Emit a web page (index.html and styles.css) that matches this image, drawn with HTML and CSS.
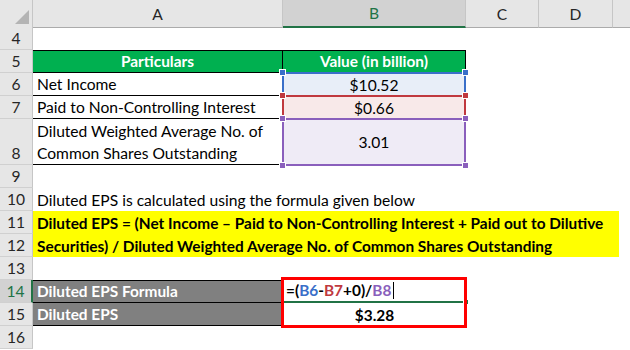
FILE: index.html
```html
<!DOCTYPE html>
<html>
<head>
<meta charset="utf-8">
<link rel="stylesheet" href="styles.css">
</head>
<body>
<div class="sheet">
  <div class="row head">
    <div class="corner"><svg width="33" height="27" viewBox="0 0 33 27"><polygon points="29,10 29,24 15,24" fill="#b4b4b4"/></svg></div>
    <div class="ch">A</div>
    <div class="ch sel">B</div>
    <div class="ch">C</div>
    <div class="ch">D</div>
    <div class="ch last"></div>
  </div>

  <div class="row">
    <div class="rh">4</div><div class="c"></div><div class="c"></div>
  </div>

  <div class="row">
    <div class="rh">5</div>
    <div class="c th">Particulars</div>
    <div class="c th thb">Value (in billion)</div>
  </div>

  <div class="row">
    <div class="rh">6</div>
    <div class="c lab">Net Income</div>
    <div class="c val hb blue"><i class="sq tl"></i><i class="sq tr"></i>$10.52</div>
  </div>

  <div class="row">
    <div class="rh">7</div>
    <div class="c lab">Paid to Non-Controlling Interest</div>
    <div class="c val hb red"><i class="sq tl"></i><i class="sq tr"></i>$0.66</div>
  </div>

  <div class="row tall">
    <div class="rh">8</div>
    <div class="c lab wrap">Diluted Weighted Average No. of<br>Common Shares Outstanding</div>
    <div class="c val mid hb purple last-hb"><i class="sq tl"></i><i class="sq tr"></i><i class="sq bl"></i><i class="sq br"></i>3.01</div>
  </div>

  <div class="row">
    <div class="rh">9</div>
  </div>

  <div class="row">
    <div class="rh">10</div>
    <div class="c span">Diluted EPS is calculated using the formula given below</div>
  </div>

  <div class="row">
    <div class="rh">11</div>
    <div class="c span yel">Diluted EPS = (Net Income – Paid to Non-Controlling Interest + Paid out to Dilutive</div>
  </div>

  <div class="row">
    <div class="rh">12</div>
    <div class="c span yel">Securities) / Diluted Weighted Average No. of Common Shares Outstanding</div>
  </div>

  <div class="row">
    <div class="rh">13</div>
  </div>

  <div class="row">
    <div class="rh act">14</div>
    <div class="c gray gtop">Diluted EPS Formula</div>
    <div class="c fx"><span class="k">=(</span><span class="bl-t">B6</span><span class="k">-</span><span class="rd-t">B7</span><span class="k">+0)/</span><span class="pu-t">B8</span><span class="caret"></span><i class="fill"></i></div>
  </div>

  <div class="row">
    <div class="rh">15</div>
    <div class="c gray">Diluted EPS</div>
    <div class="c res">$3.28</div>
  </div>

  <div class="row">
    <div class="rh">16</div>
  </div>

  <div class="redbox"></div>
</div>
</body>
</html>
```

FILE: styles.css
```css
* { box-sizing: border-box; }
html, body { margin: 0; padding: 0; background: #fff; }
body {
  font-family: Lato, "Open Sans", sans-serif;
  font-size: 15.6px;
  color: #000;
  width: 630px;
  height: 350px;
  overflow: hidden;
}
.sheet { position: relative; width: 630px; }
.row {
  display: grid;
  grid-template-columns: 33px 250px 183px 73px 74px 17px;
  height: 23px;
}
.row.tall { height: 46px; }
.row.head { height: 27px; }

.corner {
  background: #e6e6e6;
  border-right: 1px solid #c6c6c6;
  border-bottom: 1px solid #ababab;
}
.corner svg { display: block; }
.ch {
  background: #e6e6e6;
  border-right: 1px solid #c6c6c6;
  border-bottom: 1px solid #ababab;
  color: #262626;
  display: flex;
  align-items: center;
  justify-content: center;
  font-size: 15.6px;
}
.ch.sel {
  background: #d2d2d2;
  border-bottom: 2px solid #217346;
  color: #217346;
}
.ch.last { border-right: none; }

.rh {
  background: #e6e6e6;
  border-right: 1px solid #c6c6c6;
  border-bottom: 1px solid #d0d0d0;
  color: #262626;
  display: flex;
  align-items: flex-end;
  justify-content: center;
  padding-bottom: 2px;
  font-size: 15.6px;
  line-height: 18px;
}
.rh.act {
  background: #d2d2d2;
  border-right: 2px solid #217346;
  color: #217346;
}

.c {
  display: flex;
  align-items: flex-end;
  padding: 0 4px 2px 4px;
  line-height: 18px;
  white-space: nowrap;
  position: relative;
}

.th {
  background: #00b050;
  color: #fff;
  font-weight: 700;
  font-size: 15.4px;
  justify-content: center;
  border-top: 1px solid #000;
  border-bottom: 1px solid #000;
  border-right: 1px solid #000;
}
.lab { border-bottom: 1px solid #000; border-right: 1px solid #000; }
.wrap { white-space: normal; line-height: 22px; padding-bottom: 0; }

.val { justify-content: center; }
.mid { align-items: center; padding-bottom: 0; }

.hb { border-top: 2px solid; border-left: 2px solid; border-right: 2px solid; margin-left: -1px; margin-top: -1px; height: calc(100% + 1px); }
.last-hb { border-bottom: 2px solid; height: calc(100% + 2px); }
.blue { border-color: #3a6fc9; background: #e8eef8; }
.red { border-color: #c0393f; background: #f8e9e9; }
.purple { border-color: #8a5fbc; background: #efebf6; }
.sq {
  position: absolute;
  width: 7px;
  height: 7px;
  border: 1px solid #fff;
  z-index: 2;
}
.blue .sq { background: #3a6fc9; }
.red .sq { background: #c0393f; }
.purple .sq { background: #8a5fbc; }
.sq.tl { left: -5px; top: -5px; }
.sq.tr { right: -5px; top: -5px; }
.sq.bl { left: -5px; bottom: -5px; }
.sq.br { right: -5px; bottom: -5px; }

.span { grid-column: 2 / 6; }
.yel {
  grid-column: 2 / 7;
  width: 586px;
  background: #ffff00;
  font-weight: 700;
  font-size: 15.4px;
  overflow: hidden;
}

.gray {
  background: #808080;
  color: #fff;
  font-weight: 700;
  font-size: 15.4px;
  border-bottom: 1px solid #000;
  border-right: 1px solid #000;
}
.gtop { border-top: 1px solid #000; }

.fx {
  font-weight: 700;
  font-size: 15.4px;
  border-bottom: 2px solid #217346;
  padding-left: 3px;
}
.fx .k { color: #000; }
.bl-t { color: #3a6fc9; }
.rd-t { color: #c0393f; }
.pu-t { color: #8a5fbc; }
.caret {
  display: inline-block;
  width: 1px;
  height: 17px;
  background: #000;
  margin-left: 2px;
  align-self: flex-end;
}
.fill {
  position: absolute;
  right: -3px;
  bottom: -4px;
  width: 6px;
  height: 6px;
  background: #217346;
  border: 1px solid #fff;
}

.res {
  font-weight: 700;
  font-size: 15.4px;
  justify-content: center;
}

.redbox {
  position: absolute;
  left: 281px;
  top: 277px;
  width: 186px;
  height: 51px;
  border: 3px solid #ff0000;
  pointer-events: none;
}
```
